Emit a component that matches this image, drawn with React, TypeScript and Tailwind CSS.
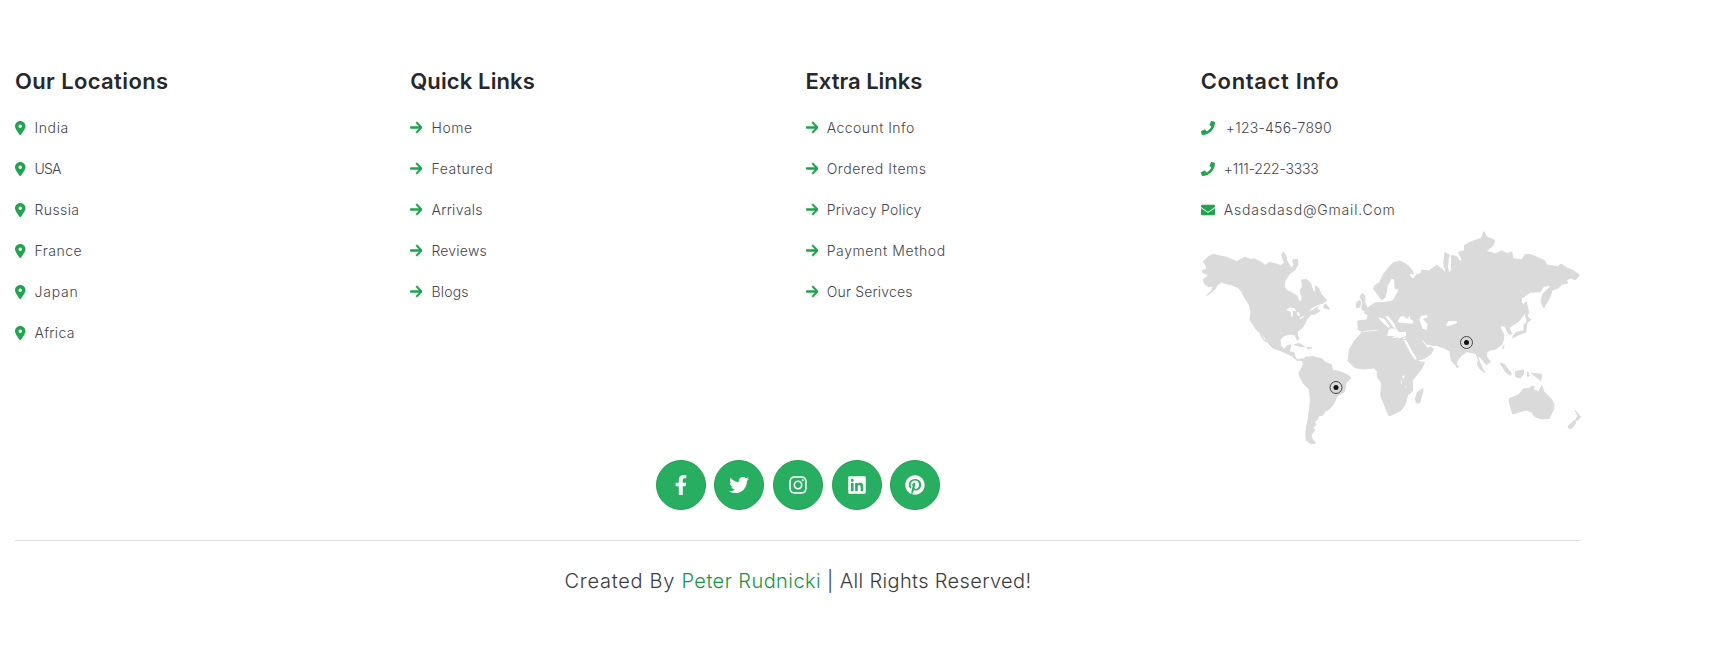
import React from "react";
import { FaPhone, FaEnvelope, FaFacebookF, FaTwitter, FaInstagram, FaLinkedin, FaPinterest } from "react-icons/fa";
import { FaArrowRight, FaLocationDot } from "react-icons/fa6";

type Entry = { label: string; tracking: string };

const locations: Entry[] = [
  { label: "India", tracking: "tracking-[0.6px]" },
  { label: "USA", tracking: "tracking-[-0.8px]" },
  { label: "Russia", tracking: "tracking-[0.4px]" },
  { label: "France", tracking: "tracking-[0.5px]" },
  { label: "Japan", tracking: "tracking-[0.75px]" },
  { label: "Africa", tracking: "tracking-[0.3px]" },
];
const quick: Entry[] = [
  { label: "Home", tracking: "tracking-[0.6px]" },
  { label: "Featured", tracking: "tracking-[0.55px]" },
  { label: "Arrivals", tracking: "tracking-[0.3px]" },
  { label: "Reviews", tracking: "tracking-[0.2px]" },
  { label: "Blogs", tracking: "tracking-[0.2px]" },
];
const extra: Entry[] = [
  { label: "Account Info", tracking: "tracking-[0.45px]" },
  { label: "Ordered Items", tracking: "tracking-[0.55px]" },
  { label: "Privacy Policy", tracking: "tracking-[0.3px]" },
  { label: "Payment Method", tracking: "tracking-[0.6px]" },
  { label: "Our Serivces", tracking: "tracking-[0.17px]" },
];

function Heading({ children, tracking }: { children: string; tracking: string }) {
  return <h3 className={`pt-px pb-[9px] text-[22px] leading-[33px] font-semibold text-[#27282b] ${tracking}`}>{children}</h3>;
}

function Row({ icon, entry, gap = "gap-[9px]" }: { icon: React.ReactNode; entry: Entry; gap?: string }) {
  return (
    <a className={`flex h-[41px] items-center text-[14px] font-light text-[#45454d] ${gap}`}>
      <span className="text-[#1fa54e]">{icon}</span>
      <span className={`whitespace-nowrap ${entry.tracking}`}>{entry.label}</span>
    </a>
  );
}

function WorldMap() {
  return (
    <svg viewBox="1201 228 380 222" className="block h-[222px] w-[380px]" fill="#dadada" stroke="#dadada" strokeLinejoin="round">
      <g transform="translate(1190 220) scale(.33333)" strokeWidth="3">
        <path d="M40 125L52 112L70 103L90 108L110 112L140 125L158 115L165 112L180 118L195 117L212 126L226 136L238 127L262 133L272 137L283 128L275 105L280 95L288 108L290 122L298 134L304 145L312 135L308 120L322 118L324 132L315 150L298 162L285 182L283 200L290 211L305 218L320 227L327 244L333 245L336 232L330 213L337 200L335 180L350 178L362 190L368 211L376 218L377 197L386 205L392 220L402 232L411 241L398 250L380 255L365 263L353 277L370 270L384 260L380 268L390 272L376 282L364 283L350 298L344 312L337 323L323 333L322 344L327 358L322 360L315 345L300 342L280 348L270 360L272 377L283 388L290 378L303 374L300 387L297 395L312 398L315 411L322 419L338 416L337 422L320 420L305 408L290 400L272 392L250 385L235 370L224 352L213 341L200 330L188 312L180 300L183 275L178 255L165 235L155 215L145 203L125 195L105 190L95 186L82 195L75 208L60 220L50 226L65 211L70 200L55 200L43 190L40 178L50 172L55 164L40 159L36 152L50 148L48 137Z" />
        <path d="M401 263L405 252L411 256L419 268L411 266ZM313 374L327 370L345 380L330 379ZM350 382L365 383L355 387ZM212 342L221 356L230 366L225 364L214 350Z" />
        <path d="M337 422L348 410L354 412L365 409L382 413L395 416L404 426L424 434L428 450L445 454L462 460L478 468L482 474L468 490L466 505L461 518L444 526L438 536L429 555L415 570L404 574L400 584L385 589L382 599L371 607L379 612L369 623L375 631L363 645L368 660L377 669L364 672L349 661L347 640L349 625L354 600L359 565L361 540L358 508L342 493L330 471L327 458L333 447L340 435Z" />
        <path d="M288 270L300 262L314 265L320 274L308 272L308 290L304 290L302 275ZM320 276L328 278L329 290L324 288ZM326 296L344 286L338 295Z" fill="#fff" stroke="none" />
      </g>
      <g transform="translate(1340 220) scale(.33333)" strokeWidth="3">
        <path d="M101 207L103 198L119 187L130 163L145 144L159 129L180 123L201 134L218 152L220 162L205 160L216 177L223 174L229 164L242 161L246 150L266 153L290 136L307 148L319 162L311 130L315 98L328 105L326 116L336 106L350 110L361 126L366 118L355 97L373 92L374 76L391 66L424 55L432 35L440 50L464 61L460 76L438 94L466 101L485 93L502 101L515 96L519 116L545 120L556 103L575 105L594 113L614 122L620 135L653 140L663 132L682 145L699 151L718 165L706 180L693 174L680 180L682 190L667 192L655 204L637 210L629 233L611 264L603 244L608 223L630 201L631 196L611 199L601 215L571 217L545 234L543 246L560 265L551 285L535 305L513 319L507 322L515 341L507 343L500 330L495 318L480 318L484 330L492 345L490 360L485 374L467 387L448 391L440 398L440 410L451 426L439 434L425 417L419 411L411 410L428 446L434 458L421 448L412 433L415 421L409 401L395 398L380 395L363 408L353 420L347 436L334 422L330 394L313 384L288 376L264 376L281 387L272 403L251 416L229 422L215 401L196 364L199 350L180 355L160 348L154 356L118 342L117 331L102 329L78 331L64 334L55 329L53 303L81 300L84 285L73 279L89 259L106 248L120 248L144 246L159 242L169 225L178 208L165 205L164 179L155 174L142 196L139 216L136 231L125 240L116 227Z" />
        <path d="M64 337L82 336L117 334L118 342L154 356L180 355L195 358L202 381L216 406L228 424L253 427L246 445L217 482L218 513L203 524L197 550L184 570L149 588L142 577L122 526L125 489L112 472L112 454L101 444L70 447L45 443L24 422L29 387L45 360L60 345Z" />
        <path d="M73 274L84 268L75 248L74 225L66 221L60 231L68 246L65 268ZM49 263L49 248L60 241L63 250L58 262ZM229 549L226 535L232 517L249 506L247 520L239 549ZM480 429L493 433L514 461L512 466L499 458ZM526 455L551 450L550 463L541 474L527 470ZM563 455L563 470L568 467ZM573 459L604 463L603 482L584 468ZM517 352L529 337L552 332L552 315L560 306L560 286L572 300L561 308L557 337L536 344L522 352ZM552 251L559 246L566 278L558 294ZM320 162L327 164L325 148L317 157ZM488 384L492 376L489 387ZM348 432L357 440L350 442ZM684 619L704 600L707 609L695 625L687 626ZM706 600L714 588L705 571L722 590L713 601Z" />
        <path d="M507 544L508 536L535 525L550 507L568 505L576 498L583 500L579 509L597 515L605 497L612 515L633 536L642 552L641 566L628 595L608 597L585 591L575 576L558 570L518 582Z" />
        <path d="M173 306L180 291L191 288L201 297L210 287L210 296L221 303L216 311L190 309ZM238 299L243 288L261 285L264 292L248 297L263 311L260 330L248 326ZM317 318L325 303L351 303L350 310L330 317ZM116 292L133 297L149 319L146 325L120 300ZM135 289L145 289L163 311L169 325L159 321L146 302ZM142 348L145 331L154 325L169 326L177 337L198 335L198 347L180 355L160 348ZM191 360L199 360L214 389L231 417L225 419L213 403ZM243 358L250 363L260 374L276 376L263 383ZM187 468L193 466L193 473L188 473ZM182 480L185 483L186 491L183 489ZM194 499L200 500L198 504ZM327 113L333 107L333 150L328 158L324 141Z" fill="#fff" stroke="none" />
      </g>
      <g fill="none" stroke="#444" strokeWidth="1">
        <circle cx="1336" cy="387.5" r="6" />
        <circle cx="1466.5" cy="342.5" r="6" />
      </g>
      <g fill="#111" stroke="none">
        <circle cx="1336" cy="387.5" r="2.5" />
        <circle cx="1466.5" cy="342.5" r="2.5" />
      </g>
    </svg>
  );
}

function Social({ children, margin }: { children: React.ReactNode; margin: string }) {
  return <a className={`flex size-[50px] items-center justify-center rounded-full border border-[#1fa54e] bg-[#27ae60] text-[20px] text-white ${margin}`}>{children}</a>;
}

export default function App() {
  const pin = <FaLocationDot className="h-[14px] w-[10.5px]" />;
  const arrow = <FaArrowRight preserveAspectRatio="none" className="h-[15px] w-[12.2px] stroke-current stroke-[20px]" />;
  return (
    <footer className="h-[646px] overflow-hidden bg-white pt-[64px] pl-[15px] font-['Inter',sans-serif]">
      <div className="w-[1566px]">
        <div className="grid h-[396px] grid-cols-4 gap-[15px]">
          <section>
            <Heading tracking="tracking-[0.37px]">Our Locations</Heading>
            {locations.map((e) => <Row key={e.label} icon={pin} entry={e} />)}
          </section>
          <section>
            <Heading tracking="tracking-[0.12px]">Quick Links</Heading>
            {quick.map((e) => <Row key={e.label} icon={arrow} entry={e} />)}
          </section>
          <section>
            <Heading tracking="tracking-[0px]">Extra Links</Heading>
            {extra.map((e) => <Row key={e.label} icon={arrow} entry={e} />)}
          </section>
          <section>
            <Heading tracking="tracking-[0.65px]">Contact Info</Heading>
            <Row icon={<FaPhone />} gap="gap-[11px]" entry={{ label: "+123-456-7890", tracking: "tracking-[0.25px]" }} />
            <Row icon={<FaPhone />} gap="gap-[9px]" entry={{ label: "+111-222-3333", tracking: "tracking-[-0.2px]" }} />
            <Row icon={<FaEnvelope />} gap="gap-[9px]" entry={{ label: "Asdasdasd@Gmail.Com", tracking: "tracking-[0.82px]" }} />
            <div className="-mt-[2px]"><WorldMap /></div>
          </section>
        </div>
        <div className="flex justify-center">
          <Social margin="mr-2"><FaFacebookF /></Social>
          <Social margin="mr-[9px]"><FaTwitter /></Social>
          <Social margin="mr-[9px]"><FaInstagram /></Social>
          <Social margin="mr-2"><FaLinkedin /></Social>
          <Social margin="mr-0"><FaPinterest /></Social>
        </div>
        <p className="mt-[30px] border-t border-[#dedede] pt-[25px] text-center text-[20px] leading-[30px] font-light tracking-[0.35px] text-[#3c3c40]">
          <span className="tracking-[0.72px]">Created By </span><span className="tracking-[0.43px] text-[#16963f]">Peter Rudnicki</span> | All Rights Reserved!
        </p>
      </div>
    </footer>
  );
}
